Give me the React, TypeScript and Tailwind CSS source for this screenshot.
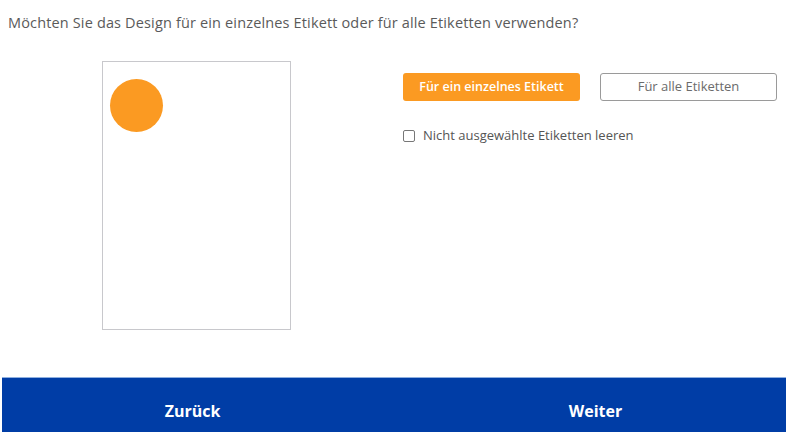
import React from "react";

export default function App() {
  return (
    <div className="w-[788px] h-[434px] bg-white flex flex-col overflow-hidden" style={{ fontFamily: '"Open Sans", "Liberation Sans", sans-serif' }}>
      <div className="flex-1 flex flex-col px-[8px]">
        <div className="pt-[13px] text-[14.5px] leading-[20px] text-[#5a5a5a] tracking-[0.15px]">
          Möchten Sie das Design für ein einzelnes Etikett oder für alle Etiketten verwenden?
        </div>
        <div className="flex mt-[28px]">
          <div className="ml-[94px] w-[189px] h-[269px] border border-[#c8c8cc] p-[7px] pt-[17px]">
            <div className="w-[53px] h-[53px] rounded-full bg-[#fb9a22]" />
          </div>
          <div className="ml-[112px] mt-[12px] flex flex-col">
            <div className="flex gap-[20px]">
              <button className="w-[177px] h-[28px] rounded-[3px] bg-[#fb9a22] text-white text-[12.5px] font-semibold">
                Für ein einzelnes Etikett
              </button>
              <button className="w-[177px] h-[28px] rounded-[3px] border border-[#9a9a9a] bg-white text-[#6b6b6b] text-[13px]">
                Für alle Etiketten
              </button>
            </div>
            <label className="flex items-center mt-[25px] text-[13px] text-[#555]">
              <span className="w-[12px] h-[12px] border border-[#777] rounded-[2px] bg-white" />
              <span className="ml-[8px]">Nicht ausgewählte Etiketten leeren</span>
            </label>
          </div>
        </div>
      </div>
      <div className="mx-[2px] mb-[2px] h-[55px] bg-[#003da6] border-t border-[#8fb0e0] flex text-white font-bold text-[16px] pt-[12px]">
        <div className="flex-1 flex items-center justify-center pr-[14px]">Zurück</div>
        <div className="flex-1 flex items-center justify-center pl-[8px]">Weiter</div>
      </div>
    </div>
  );
}
